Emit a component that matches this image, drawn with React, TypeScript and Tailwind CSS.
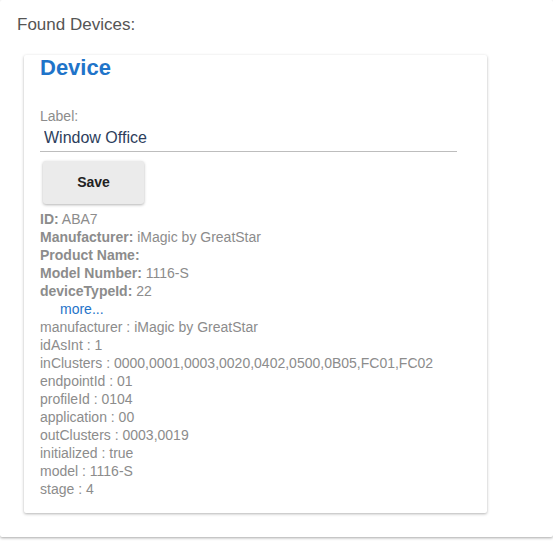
import * as React from "react"

const summary = [
  { label: "ID", value: "ABA7" },
  { label: "Manufacturer", value: "iMagic by GreatStar" },
  { label: "Product Name", value: "" },
  { label: "Model Number", value: "1116-S" },
  { label: "deviceTypeId", value: "22" },
]

const details: [string, string][] = [
  ["manufacturer", "iMagic by GreatStar"],
  ["idAsInt", "1"],
  ["inClusters", "0000,0001,0003,0020,0402,0500,0B05,FC01,FC02"],
  ["endpointId", "01"],
  ["profileId", "0104"],
  ["application", "00"],
  ["outClusters", "0003,0019"],
  ["initialized", "true"],
  ["model", "1116-S"],
  ["stage", "4"],
]

function DeviceCard() {
  const [label, setLabel] = React.useState("Window Office")

  return (
    <div className="ml-[24px] w-[463px] rounded-[2px] bg-white pl-[16px] pb-[15px] shadow-[0_1px_3px_rgba(0,0,0,0.3)]">
      <h2 className="text-[22px] font-bold leading-[26px] text-[#1f74c9]">Device</h2>

      <div className="mt-[28px] text-[14px] leading-[15px] text-[#8c8c8c]">Label:</div>
      <input
        value={label}
        onChange={(e) => setLabel(e.target.value)}
        className="block h-[28px] w-[417px] border-b border-[#bdbdbd] px-[4px] text-[16px] text-[#2d3e5c] outline-none"
      />

      <button className="mt-[9px] ml-[3px] flex h-[43px] w-[101px] items-center justify-center rounded-[3px] bg-[#ebebeb] text-[14px] font-bold text-[#222] shadow-[0_1px_3px_rgba(0,0,0,0.3)]">
        Save
      </button>

      <div className="mt-[6px] text-[14px] leading-[18px] text-[#8c8c8c]">
        {summary.map((row) => (
          <div key={row.label}>
            <span className="font-bold">{row.label}:</span>
            {row.value && <span> {row.value}</span>}
          </div>
        ))}
        <a href="#" className="block pl-[20px] text-[#1f74c9]">
          more...
        </a>
        {details.map(([k, v]) => (
          <div key={k}>
            {k} : {v}
          </div>
        ))}
      </div>
    </div>
  )
}

export default function App() {
  return (
    <div className="min-h-[551px] bg-white font-['Liberation_Sans',Arial,sans-serif]">
      <div className="rounded-[2px] bg-white pt-[15px] pb-[24px] shadow-[0_1px_3px_rgba(0,0,0,0.35)]">
        <div className="pl-[17px] text-[17px] leading-[20px] text-[#555]">Found Devices:</div>
        <div className="mt-[20px]">
          <DeviceCard />
        </div>
      </div>
    </div>
  )
}
